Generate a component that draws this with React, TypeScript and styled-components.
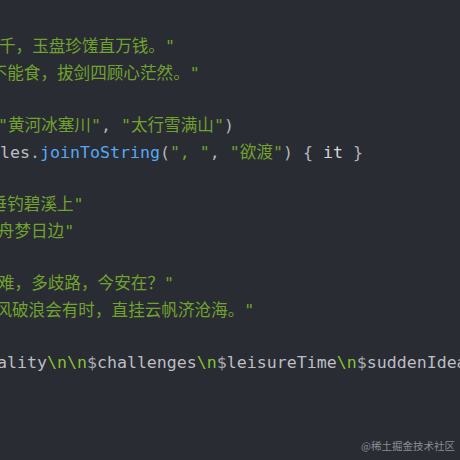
import React from "react";
import styled, { createGlobalStyle } from "styled-components";

const GlobalStyle = createGlobalStyle`
  html, body { margin: 0; padding: 0; background: #292c33; }
  #root { width: 460px; height: 460px; }
`;

type Kind = "def" | "punc" | "fn" | "str" | "esc" | "it" | "tpl";

const colors: Record<Kind, string> = {
  def: "#bcbec4",
  punc: "#b3b5bb",
  fn: "#56a8f5",
  str: "#71a22f",
  esc: "#86c232",
  it: "#d4d6dc",
  tpl: "#a9abb1",
};

const Editor = styled.div`
  position: relative;
  width: 460px;
  height: 460px;
  overflow: hidden;
  background: #292c33;
  padding-top: 8px;
  box-sizing: border-box;
`;

const Code = styled.div`
  display: flex;
  flex-direction: column;
  font-family: "DejaVu Sans Mono", "Noto Sans CJK SC", monospace;
  font-size: 16.6px;
  line-height: 26.33px;
  white-space: pre;
`;

const Line = styled.div<{ $indent: number }>`
  height: 26.33px;
  margin-left: ${(p) => p.$indent}px;
`;

const Tok = styled.span<{ $kind: Kind }>`
  color: ${(p) => colors[p.$kind]};
`;

const Watermark = styled.div`
  position: absolute;
  right: 5px;
  bottom: 8px;
  font-family: "Noto Sans CJK SC", "Noto Sans", sans-serif;
  font-size: 10.5px;
  line-height: 12px;
  color: #8a8d94;
`;

type Tk = [Kind, string];
interface L {
  indent: number;
  toks: Tk[];
}

const lines: L[] = [
  { indent: 0, toks: [] },
  { indent: -1, toks: [["str", '千，玉盘珍馐直万钱。"']] },
  { indent: -9.4, toks: [["str", '不能食，拔剑四顾心茫然。"']] },
  { indent: 0, toks: [] },
  {
    indent: -2,
    toks: [
      ["str", '"黄河冰塞川"'],
      ["punc", ", "],
      ["str", '"太行雪满山"'],
      ["punc", ")"],
    ],
  },
  {
    indent: 0,
    toks: [
      ["def", "les"],
      ["punc", "."],
      ["fn", "joinToString"],
      ["punc", "("],
      ["str", '", "'],
      ["punc", ", "],
      ["str", '"欲渡"'],
      ["punc", ") { "],
      ["it", "it"],
      ["punc", " }"],
    ],
  },
  { indent: 0, toks: [] },
  { indent: -9.4, toks: [["str", '垂钓碧溪上"']] },
  { indent: -2.2, toks: [["str", '舟梦日边"']] },
  { indent: 0, toks: [] },
  { indent: -2, toks: [["str", '难，多歧路，今安在？"']] },
  { indent: -4.6, toks: [["str", '风破浪会有时，直挂云帆济沧海。"']] },
  { indent: 0, toks: [] },
  {
    indent: -3,
    toks: [
      ["def", "ality"],
      ["esc", "\\n\\n"],
      ["tpl", "$"],
      ["def", "challenges"],
      ["esc", "\\n"],
      ["tpl", "$"],
      ["def", "leisureTime"],
      ["esc", "\\n"],
      ["tpl", "$"],
      ["def", "suddenIdea"],
      ["str", '"'],
    ],
  },
];

export default function App() {
  return (
    <>
      <GlobalStyle />
      <Editor>
        <Code>
          {lines.map((l, i) => (
            <Line key={i} $indent={l.indent}>
              {l.toks.map(([k, t], j) => (
                <Tok key={j} $kind={k}>
                  {t}
                </Tok>
              ))}
            </Line>
          ))}
        </Code>
        <Watermark>@稀土掘金技术社区</Watermark>
      </Editor>
    </>
  );
}
